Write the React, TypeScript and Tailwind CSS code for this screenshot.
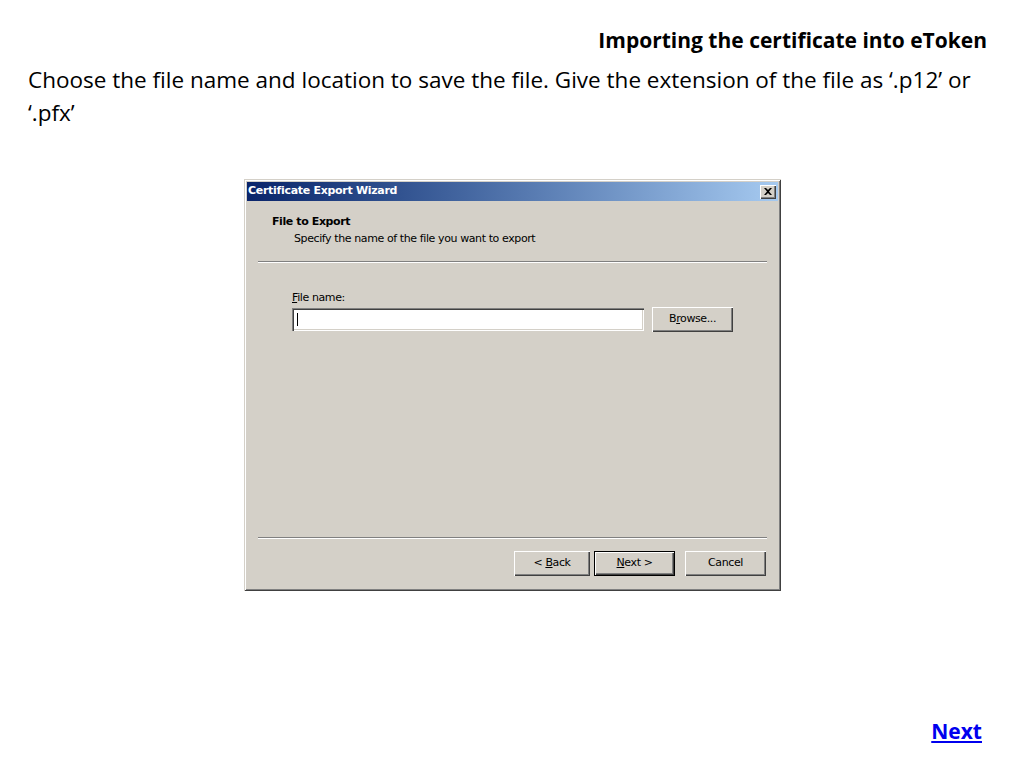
import { useState } from 'react';

function WinButton({
  children,
  focused = false,
  className = '',
}: {
  children: React.ReactNode;
  focused?: boolean;
  className?: string;
}) {
  return (
    <button
      className={`h-[25px] bg-[#d4d0c8] text-[11px] text-black ${
        focused
          ? 'border border-black shadow-[inset_1px_1px_0_#fff,inset_-1px_-1px_0_#404040,inset_-2px_-2px_0_#808080]'
          : 'shadow-[inset_1px_1px_0_#fff,inset_-1px_-1px_0_#404040,inset_-2px_-2px_0_#808080]'
      } ${className}`}
    >
      {children}
    </button>
  );
}

export default function App() {
  const [fileName, setFileName] = useState('');

  return (
    <div className="w-[1024px] h-[768px] bg-white flex flex-col font-['Open_Sans',sans-serif] text-black">
      {/* Slide heading */}
      <div className="flex justify-end pr-[37px] pt-[26px]">
        <h1 className="text-[21px] font-bold leading-[28px]">
          Importing the certificate into eToken
        </h1>
      </div>
      <p className="px-[28px] pt-[9px] text-[22.5px] leading-[33px]">
        Choose the file name and location to save the file. Give the extension of the file as ‘.p12’ or
        <br />
        ‘.pfx’
      </p>

      {/* Wizard dialog */}
      <div className="ml-[244px] mt-[50px] w-[537px] h-[412px] bg-[#d4d0c8] flex flex-col font-['DejaVu_Sans',sans-serif] shadow-[inset_1px_1px_0_#d4d0c8,inset_-1px_-1px_0_#404040,inset_2px_2px_0_#fff,inset_-2px_-2px_0_#808080] p-[3px]">
        <div className="h-[19px] flex items-center justify-between bg-gradient-to-r from-[#0a246a] to-[#a6caf0] pl-[1px] pr-[2px]">
          <span className="text-white text-[11px] font-bold tracking-[-0.3px]">Certificate Export Wizard</span>
          <button className="w-[16px] h-[14px] bg-[#d4d0c8] flex items-center justify-center shadow-[inset_1px_1px_0_#fff,inset_-1px_-1px_0_#404040,inset_-2px_-2px_0_#808080]">
            <svg width="8" height="7" viewBox="0 0 8 7">
              <path d="M0 0h2l2 2 2-2h2L5 3.5 8 7H6L4 5 2 7H0l3-3.5z" fill="#000" />
            </svg>
          </button>
        </div>

        <div className="flex-1 flex flex-col px-[11px] text-[11px] tracking-[-0.4px]">
          <div className="pl-[14px] pt-[14px]">
            <div className="font-bold leading-[14px]">File to Export</div>
            <div className="pl-[22px] pt-[3px] leading-[14px]">Specify the name of the file you want to export</div>
          </div>
          <div className="mt-[15px] h-[2px] border-t border-[#808080] border-b border-b-white" />

          <div className="pl-[34px] pt-[28px]">
            <div className="leading-[14px]">
              <span className="underline">F</span>ile name:
            </div>
            <div className="mt-[2px] flex items-center gap-[8px]">
              <div className="relative">
                <input
                  value={fileName}
                  onChange={(e) => setFileName(e.target.value)}
                  className="w-[352px] h-[23px] bg-white px-[4px] text-[11px] outline-none shadow-[inset_1px_1px_0_#808080,inset_2px_2px_0_#404040,inset_-1px_-1px_0_#fff,inset_-2px_-2px_0_#d4d0c8]"
                />
                {fileName === '' && (
                  <span className="absolute left-[5px] top-[5px] w-[1px] h-[13px] bg-black" />
                )}
              </div>
              <WinButton className="w-[81px]">
                B<span className="underline">r</span>owse...
              </WinButton>
            </div>
          </div>

          <div className="flex-1" />
          <div className="h-[2px] border-t border-[#808080] border-b border-b-white" />
          <div className="flex justify-end pt-[12px] pb-[12px] pr-[1px]">
            <WinButton className="w-[76px]">
              &lt; <span className="underline">B</span>ack
            </WinButton>
            <WinButton focused className="w-[81px] ml-[4px]">
              <span className="underline">N</span>ext &gt;
            </WinButton>
            <WinButton className="w-[81px] ml-[10px]">Cancel</WinButton>
          </div>
        </div>
      </div>

      <div className="flex-1" />
      <div className="flex justify-end pr-[42px] pb-[23px]">
        <a href="#" className="text-[#0000ee] text-[21px] font-bold underline leading-[28px]">
          Next
        </a>
      </div>
    </div>
  );
}
